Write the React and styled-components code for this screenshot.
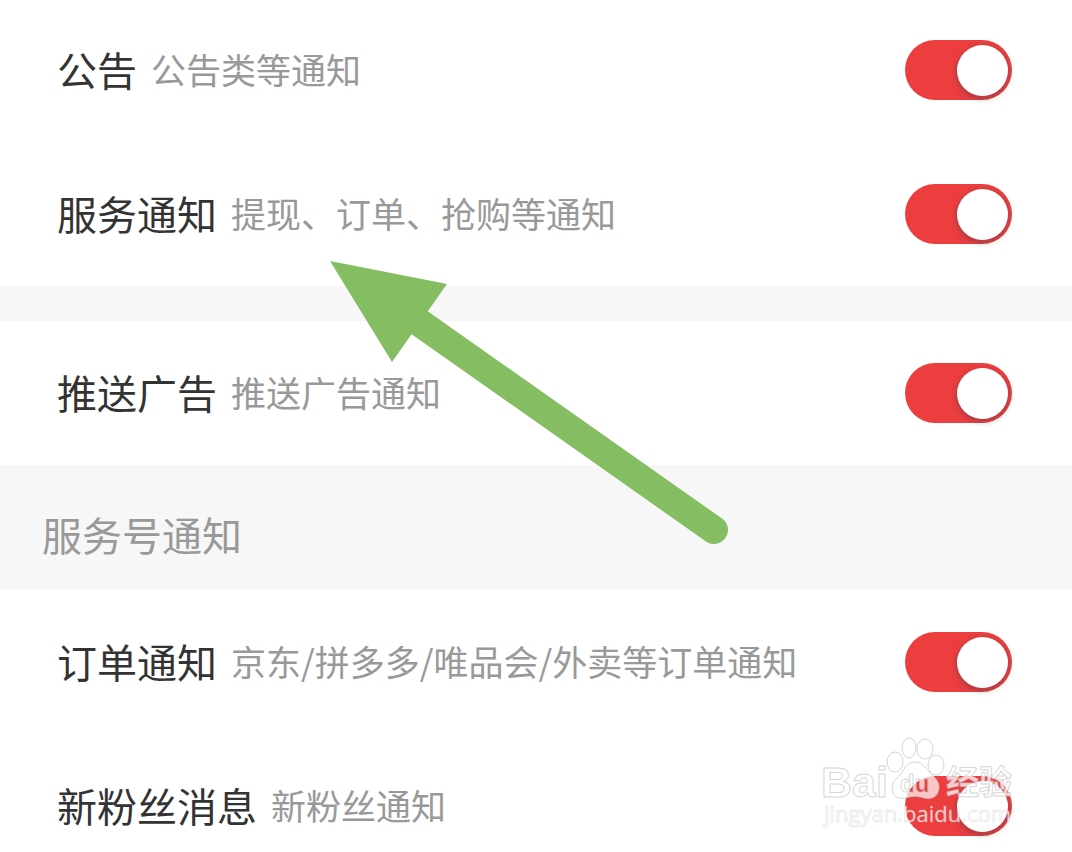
import React from 'react';
import styled, { createGlobalStyle } from 'styled-components';

const GlobalStyle = createGlobalStyle`
	* {
		box-sizing: border-box;
	}

	body {
		margin: 0;
		background: #fff;
		font-family: "Noto Sans CJK SC", sans-serif;
	}
`;

const Page = styled.main`
	position: relative;
	height: 100vh;
	overflow: hidden;
`;

const Group = styled.section`
	margin-top: ${props => (props.$first ? '-2px' : '0')};
`;

const Row = styled.label`
	display: flex;
	align-items: center;
	justify-content: space-between;
	padding: 42px 60px 42px 57px;
	cursor: pointer;
`;

const RowText = styled.span`
	display: flex;
	align-items: center;
	gap: 14px;
	padding-bottom: 2px;
	line-height: 58px;
	white-space: nowrap;
`;

const Title = styled.span`
	font-size: 40px;
	color: #333;
`;

const Note = styled.span`
	font-size: 35px;
	color: #999;
`;

const Toggle = styled.input`
	appearance: none;
	flex: none;
	display: flex;
	align-items: center;
	width: 107px;
	height: 60px;
	margin: 0;
	padding: 0 4px;
	border-radius: 30px;
	background: #ddd;
	cursor: pointer;

	&::before {
		content: '';
		width: 51px;
		height: 51px;
		border-radius: 50%;
		background: #fff;
		box-shadow: 0 2px 6px rgba(60, 60, 80, 0.5);
	}

	&:checked {
		justify-content: flex-end;
		background: #ed3e3f;
	}
`;

const Divider = styled.div`
	height: 35px;
	background: #f7f7f7;
`;

const SectionTitle = styled.h2`
	margin: 0;
	padding: 39px 42px 26px;
	background: #f7f7f7;
	color: #999;
	font-size: 40px;
	font-weight: 400;
	line-height: 60px;
`;

const Arrow = styled.svg`
	position: absolute;
	left: 328px;
	top: 258px;
	pointer-events: none;
`;

const Watermark = styled.svg`
	position: absolute;
	right: 52px;
	bottom: 24px;
	pointer-events: none;
`;

const MarkText = styled.text`
	font-family: ${props => props.$family}, sans-serif;
	font-size: ${props => props.$size}px;
	font-weight: ${props => (props.$bold ? 700 : 400)};
`;

const Setting = props => {
	const {title, note} = props;
	return (
		<Row>
			<RowText>
				<Title>{title}</Title>
				<Note>{note}</Note>
			</RowText>
			<Toggle type="checkbox" role="switch" defaultChecked />
		</Row>
	);
};

const pawPad = 'M99 38C106 38 110 45 114 49C119 53 124 58 123 65C122 73 115 76 108 74C102 72 96 72 90 74C83 76 76 72 76 64C76 57 82 54 86 48C90 43 92 38 99 38Z';

const BaiduMark = () => (
	<Watermark width="204" height="104" viewBox="0 0 204 104">
		<mask id="paw-letters">
			<rect width="204" height="104" fill="#fff" />
			<MarkText x="84" y="68" $family="Liberation Sans" $size={24} $bold fill="#000">du</MarkText>
		</mask>
		<path d={pawPad} fill="#fff" fillOpacity="0.7" mask="url(#paw-letters)" />
		<g fill="none" stroke="#bbb" strokeOpacity="0.6">
			<path d={pawPad} />
			<MarkText x="84" y="68" $family="Liberation Sans" $size={24} $bold>du</MarkText>
		</g>
		<g fill="#fff" fillOpacity="0.75" stroke="#bbb" strokeOpacity="0.6">
			<ellipse cx="79" cy="38" rx="8" ry="10" />
			<ellipse cx="93" cy="24" rx="7" ry="10" />
			<ellipse cx="109" cy="25" rx="8" ry="10" />
			<ellipse cx="120" cy="41" rx="8" ry="10" />
			<MarkText x="5" y="73" $family="Liberation Sans" $size={43} $bold>Bai</MarkText>
			<MarkText x="130" y="70" $family="Noto Sans CJK SC" $size={33} $bold>经验</MarkText>
			<MarkText x="8" y="98" $family="Open Sans" $size={22} strokeOpacity="0.3">jingyan.baidu.com</MarkText>
		</g>
	</Watermark>
);

function App() {
	return (
		<Page>
			<GlobalStyle />
			<Group $first>
				<Setting title="公告" note="公告类等通知" />
				<Setting title="服务通知" note="提现、订单、抢购等通知" />
			</Group>
			<Divider />
			<Group>
				<Setting title="推送广告" note="推送广告通知" />
			</Group>
			<Group>
				<SectionTitle>服务号通知</SectionTitle>
				<Setting title="订单通知" note="京东/拼多多/唯品会/外卖等订单通知" />
				<Setting title="新粉丝消息" note="新粉丝通知" />
			</Group>
			<Arrow width="402" height="290" viewBox="328 258 402 290" aria-hidden="true">
				<path d="M420 323L714 530" stroke="#85be62" strokeWidth="28" strokeLinecap="round" />
				<path d="M330 261L447 284L392 362Z" fill="#85be62" />
			</Arrow>
			<BaiduMark />
		</Page>
	);
}

export default App;
